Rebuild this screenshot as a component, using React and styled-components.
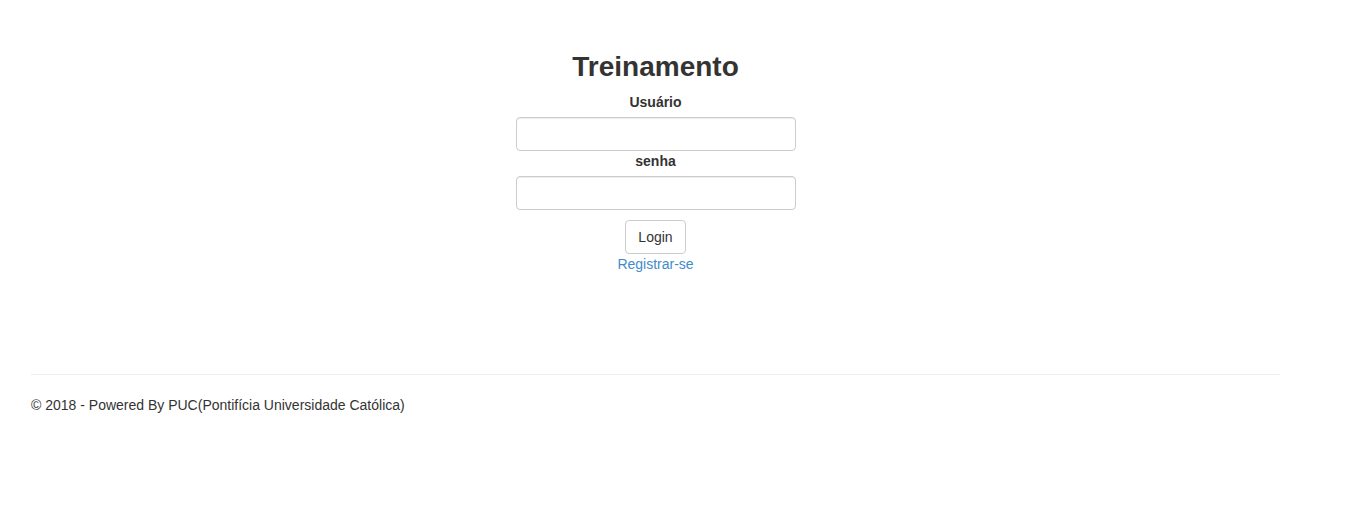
import React from "react"
import styled, { createGlobalStyle } from "styled-components"

const GlobalStyle = createGlobalStyle`
  body {
    margin: 0;
    font-family: "Liberation Sans", Arial, sans-serif;
    font-size: 14px;
    line-height: 1.42857143;
    color: #333;
    background: #fff;
  }
`

const Page = styled.div`
  padding: 0 70px 0 31px;
`

const LoginForm = styled.form`
  display: flex;
  flex-direction: column;
  align-items: center;
  width: 280px;
  margin: 0 auto;
  padding-top: 52px;

  h2 {
    font-size: 28px;
    font-weight: bold;
    line-height: 1.1;
    margin: 0 0 9px;
  }
`

const Label = styled.label`
  font-weight: bold;
  margin-bottom: 5px;
`

const Input = styled.input`
  box-sizing: border-box;
  width: 280px;
  height: 34px;
  border: 1px solid #ccc;
  border-radius: 4px;
  box-shadow: inset 0 1px 1px rgba(0, 0, 0, 0.075);
  padding: 6px 12px;
  font: inherit;
`

const Button = styled.button`
  margin-top: 10px;
  height: 34px;
  padding: 6px 12px;
  background: #fff;
  border: 1px solid #ccc;
  border-radius: 4px;
  color: #333;
  font: inherit;
  line-height: 1.42857143;
`

const RegisterLink = styled.a`
  color: #428bca;
  text-decoration: none;
`

const Footer = styled.footer`
  margin-top: 100px;

  hr {
    border: 0;
    border-top: 1px solid #eee;
    margin: 0 0 20px;
  }

  p {
    margin: 0;
  }
`

export default function App() {
  return (
    <>
      <GlobalStyle />
      <Page>
        <LoginForm onSubmit={e => e.preventDefault()}>
          <h2>Treinamento</h2>
          <Label>Usuário</Label>
          <Input type="text" />
          <Label>senha</Label>
          <Input type="password" />
          <Button type="submit">Login</Button>
          <RegisterLink href="#">Registrar-se</RegisterLink>
        </LoginForm>
        <Footer>
          <hr />
          <p>© 2018 - Powered By PUC(Pontifícia Universidade Católica)</p>
        </Footer>
      </Page>
    </>
  )
}
